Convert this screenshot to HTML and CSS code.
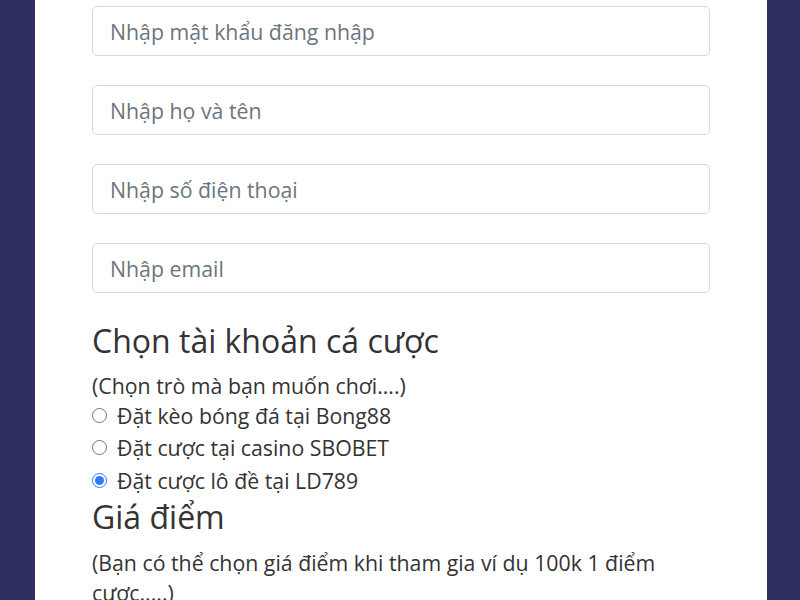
FILE: index.html
```html
<!DOCTYPE html>
<html lang="vi">
<head>
    <meta charset="UTF-8">
    <meta name="viewport" content="width=device-width, initial-scale=1.0">
    <title>Đăng ký tài khoản</title>
    <link rel="stylesheet" href="styles.css">
</head>
<body>
    <div class="registerCard">
        <form class="registerForm">
            <input type="password" class="field" placeholder="Nhập mật khẩu đăng nhập">
            <input type="text" class="field" placeholder="Nhập họ và tên">
            <input type="tel" class="field" placeholder="Nhập số điện thoại">
            <input type="email" class="field" placeholder="Nhập email">

            <h3 class="title title-first">Chọn tài khoản cá cược</h3>
            <p class="note">(Chọn trò mà bạn muốn chơi....)</p>
            <div class="choices">
                <label class="choice"><input type="radio" name="game"> Đặt kèo bóng đá tại Bong88</label>
                <label class="choice"><input type="radio" name="game"> Đặt cược tại casino SBOBET</label>
                <label class="choice"><input type="radio" name="game" checked> Đặt cược lô đề tại LD789</label>
            </div>

            <h3 class="title">Giá điểm</h3>
            <p class="note note-wide">(Bạn có thể chọn giá điểm khi tham gia ví dụ 100k 1 điểm cược.....)</p>
        </form>
    </div>
</body>
</html>
```

FILE: styles.css
```css
body {
    margin: 0;
    background-color: #2e2f5e;
    font-family: "Open Sans", "Noto Sans", sans-serif;
    color: #333;
}

.registerCard {
    background-color: #fff;
    width: 732px;
    margin-left: 35px;
    min-height: 600px;
    padding: 6px 57px 0 57px;
    box-sizing: border-box;
}

.registerForm {
    display: flex;
    flex-direction: column;
}

.field {
    height: 50px;
    margin-bottom: 29px;
    padding: 0 17px;
    border: 1px solid #d6d9dc;
    border-radius: 5px;
    font-family: inherit;
    font-size: 21.3px;
    color: #495057;
    box-sizing: border-box;
}
.field::placeholder {
    color: #6c757d;
}
.field:nth-of-type(4) {
    margin-bottom: 0;
}

.title {
    margin: 0;
    font-size: 32px;
    font-weight: 400;
    line-height: 40px;
    color: #333;
}
.title-first {
    margin-top: 28px;
}

.note {
    margin: 10px 0 0 0;
    font-size: 21.3px;
    line-height: 30px;
}
.note-wide {
    margin-top: 11px;
}

.choices {
    display: flex;
    flex-direction: column;
    margin-top: -2px;
}
.choice {
    display: flex;
    align-items: center;
    gap: 10px;
    height: 32.5px;
    font-size: 21.3px;
}
.choice input {
    width: 15px;
    height: 15px;
    margin: 0;
    accent-color: #2f7cf6;
}
```
